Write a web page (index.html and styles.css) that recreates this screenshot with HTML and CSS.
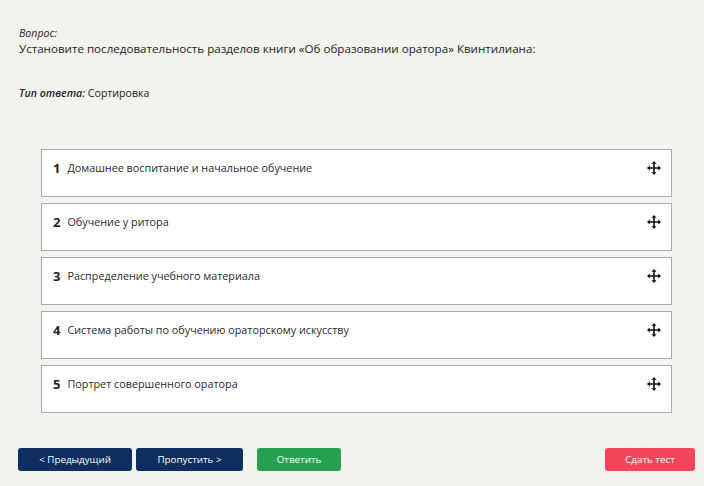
FILE: index.html
```html
<!DOCTYPE html>
<html lang="ru">
<head>
<meta charset="utf-8">
<link rel="stylesheet" href="styles.css">
</head>
<body>
<div class="page">
  <div class="question">
    <div class="label">Вопрос:</div>
    <div class="qtext">Установите последовательность разделов книги «Об образовании оратора» Квинтилиана:</div>
  </div>
  <div class="type"><span class="label">Тип ответа:</span> Сортировка</div>
  <div class="list">
    <div class="item"><span class="num">1</span><span class="txt">Домашнее воспитание и начальное обучение</span><svg class="move" viewBox="0 0 14 14"><path d="M7 1v12M1 7h12"/><path class="head" d="M7 0l-2.5 2.8h5zM7 14l-2.5-2.8h5zM0 7l2.8-2.5v5zM14 7l-2.8-2.5v5z"/></svg></div>
    <div class="item"><span class="num">2</span><span class="txt">Обучение у ритора</span><svg class="move" viewBox="0 0 14 14"><path d="M7 1v12M1 7h12"/><path class="head" d="M7 0l-2.5 2.8h5zM7 14l-2.5-2.8h5zM0 7l2.8-2.5v5zM14 7l-2.8-2.5v5z"/></svg></div>
    <div class="item"><span class="num">3</span><span class="txt">Распределение учебного материала</span><svg class="move" viewBox="0 0 14 14"><path d="M7 1v12M1 7h12"/><path class="head" d="M7 0l-2.5 2.8h5zM7 14l-2.5-2.8h5zM0 7l2.8-2.5v5zM14 7l-2.8-2.5v5z"/></svg></div>
    <div class="item"><span class="num">4</span><span class="txt">Система работы по обучению ораторскому искусству</span><svg class="move" viewBox="0 0 14 14"><path d="M7 1v12M1 7h12"/><path class="head" d="M7 0l-2.5 2.8h5zM7 14l-2.5-2.8h5zM0 7l2.8-2.5v5zM14 7l-2.8-2.5v5z"/></svg></div>
    <div class="item"><span class="num">5</span><span class="txt">Портрет совершенного оратора</span><svg class="move" viewBox="0 0 14 14"><path d="M7 1v12M1 7h12"/><path class="head" d="M7 0l-2.5 2.8h5zM7 14l-2.5-2.8h5zM0 7l2.8-2.5v5zM14 7l-2.8-2.5v5z"/></svg></div>
  </div>
  <div class="buttons">
    <button class="btn navy prev">&lt; Предыдущий</button>
    <button class="btn navy skip">Пропустить &gt;</button>
    <button class="btn green answer">Ответить</button>
    <button class="btn red finish">Сдать тест</button>
  </div>
</div>
</body>
</html>
```
FILE: styles.css
```css
html, body {
  margin: 0;
  padding: 0;
  background: #f3f2ef;
}
body {
  font-family: "Open Sans", "Noto Sans", sans-serif;
  color: #222;
  width: 704px;
  height: 486px;
  overflow: hidden;
}
.page {
  padding: 26px 9px 0 19px;
}
.question .label {
  font-size: 10.6px;
  font-style: italic;
  line-height: 14px;
}
.qtext {
  font-size: 11.6px;
  line-height: 18px;
}
.type {
  margin-top: 28px;
  font-size: 10.6px;
  line-height: 14px;
}
.type .label {
  font-style: italic;
  font-weight: 600;
}
.list {
  margin: 49px 23px 0 22px;
  display: flex;
  flex-direction: column;
  gap: 6px;
}
.item {
  background: #fff;
  border: 1px solid #ababab;
  display: flex;
  align-items: flex-start;
  padding: 10px 10px 0 11px;
  box-sizing: border-box;
  height: 48px;
  font-size: 10.8px;
  line-height: 16px;
}
.num {
  font-weight: 700;
  font-size: 13px;
  margin-right: 7px;
}
.txt {
  flex: 1;
  color: #2a2a2a;
}
.move {
  width: 14px;
  height: 14px;
  margin-top: 1px;
}
.move path {
  stroke: #111;
  stroke-width: 1.6;
  fill: none;
}
.move path.head {
  stroke: none;
  fill: #111;
}
.buttons {
  margin-top: 35px;
  display: flex;
  align-items: center;
}
.btn {
  font-family: "Open Sans", "Noto Sans", sans-serif;
  font-size: 9.8px;
  color: #fff;
  border: none;
  border-radius: 3px;
  height: 23px;
  padding: 0;
  cursor: pointer;
}
.navy { background: #0d2e5e; }
.green { background: #26a152; }
.red { background: #f5455a; }
.prev { width: 114px; margin-left: -1px; }
.skip { width: 107px; margin-left: 4px; }
.answer { width: 84px; margin-left: 14px; }
.finish { width: 90px; margin-left: auto; }
```
